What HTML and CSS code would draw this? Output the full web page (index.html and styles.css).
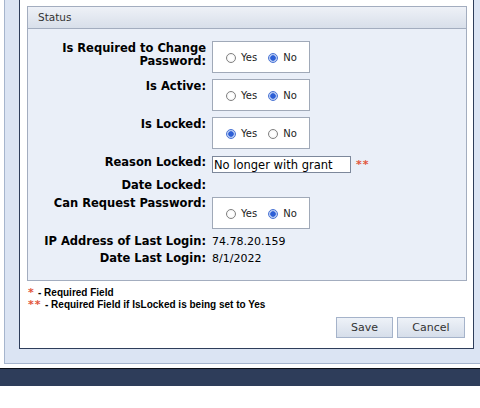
FILE: index.html
```html
<!DOCTYPE html>
<html>
<head>
<meta charset="utf-8">
<link rel="stylesheet" href="styles.css">
</head>
<body>
<div class="outer">
  <div class="inner">
    <div class="fieldset">
      <div class="legend">Status</div>
      <div class="fs-body">
        <div class="row">
          <div class="label">Is Required to Change Password:</div>
          <div class="radiobox">
            <span class="radio"></span><span class="rtext">Yes</span>
            <span class="radio on"></span><span class="rtext">No</span>
          </div>
        </div>
        <div class="row">
          <div class="label">Is Active:</div>
          <div class="radiobox">
            <span class="radio"></span><span class="rtext">Yes</span>
            <span class="radio on"></span><span class="rtext">No</span>
          </div>
        </div>
        <div class="row">
          <div class="label">Is Locked:</div>
          <div class="radiobox">
            <span class="radio on"></span><span class="rtext">Yes</span>
            <span class="radio"></span><span class="rtext">No</span>
          </div>
        </div>
        <div class="row row-input">
          <div class="label label-flat">Reason Locked:</div>
          <div class="field">
            <input class="textbox" type="text" value="No longer with grant">
            <span class="req">**</span>
          </div>
        </div>
        <div class="row row-text gap-a">
          <div class="label label-flat">Date Locked:</div>
          <div class="value"></div>
        </div>
        <div class="row gap-d">
          <div class="label label-flat">Can Request Password:</div>
          <div class="radiobox">
            <span class="radio"></span><span class="rtext">Yes</span>
            <span class="radio on"></span><span class="rtext">No</span>
          </div>
        </div>
        <div class="row row-text gap-b">
          <div class="label label-flat">IP Address of Last Login:</div>
          <div class="value">74.78.20.159</div>
        </div>
        <div class="row row-text gap-c">
          <div class="label label-flat">Date Last Login:</div>
          <div class="value">8/1/2022</div>
        </div>
      </div>
    </div>
    <div class="notes">
      <div class="note"><span class="star">*</span><span class="ntext">- Required Field</span></div>
      <div class="note"><span class="star star2">**</span><span class="ntext">- Required Field if IsLocked is being set to Yes</span></div>
    </div>
    <div class="buttons">
      <button class="btn btn-save" type="button">Save</button>
      <button class="btn btn-cancel" type="button">Cancel</button>
    </div>
  </div>
</div>
<div class="bar"></div>
</body>
</html>
```
FILE: styles.css
```css
html, body {
  margin: 0;
  padding: 0;
  background: #ffffff;
}
body {
  width: 480px;
  overflow: hidden;
  font-family: "DejaVu Sans", Verdana, sans-serif;
  color: #000;
}
.outer {
  margin: 0 -2px 0 4px;
  background: #dbe4f3;
  border: 1px solid #a6b5cd;
  border-top: 0;
  padding: 0 7px 14px 14px;
}
.inner {
  background: #ffffff;
  border: 1px solid #2e3d5a;
  border-top: 0;
  padding: 6px 6px 10px 7px;
}
.fieldset {
  border: 1px solid #a3adbf;
  background: #eaeff8;
}
.legend {
  height: 21px;
  line-height: 21px;
  border-bottom: 1px solid #a3adbf;
  background: linear-gradient(#eef1f7, #d8dfea);
  padding-left: 10px;
  font-size: 10.5px;
  color: #333;
}
.fs-body {
  padding: 12px 0 15px 0;
}
.row {
  display: flex;
  align-items: flex-start;
  gap: 6px;
}
.row + .row {
  margin-top: 6px;
}
.row.row-input {
  margin-top: 7px;
}
.row.gap-a { margin-top: 3px; }
.row.gap-d { margin-top: 8px; }
.row.gap-b { margin-top: 6px; }
.row.gap-c { margin-top: 4px; }
.label {
  width: 178px;
  flex: none;
  text-align: right;
  font-weight: bold;
  font-size: 11.5px;
  line-height: 13px;
  margin-top: 1px;
}
.label-flat {
  margin-top: 0;
}
.row-text {
  align-items: baseline;
  height: 13px;
}
.value {
  font-size: 11px;
  line-height: 13px;
  min-height: 13px;
}
.radiobox {
  box-sizing: border-box;
  width: 98px;
  height: 32px;
  background: #fff;
  border: 1px solid #a0a9b8;
  display: flex;
  align-items: center;
  padding: 1px 0 0 13px;
  font-size: 10px;
  line-height: 13px;
  color: #222;
}
.radio {
  box-sizing: border-box;
  width: 10px;
  height: 10px;
  border-radius: 50%;
  border: 1px solid #808080;
  background: radial-gradient(circle, #ffffff 0 2px, #f0f0f0 5px);
  flex: none;
}
.radio.on {
  border-color: #4a74d4;
  background: radial-gradient(circle, #2d5fd6 0 2.4px, #a9c0f0 3px, #e4ecfb 5px);
}
.rtext {
  margin-left: 5px;
  margin-right: 11px;
}
.field {
  display: flex;
  align-items: center;
}
.textbox {
  box-sizing: border-box;
  width: 139px;
  height: 17px;
  margin: 0;
  border: 1px solid #7d889b;
  padding: 0 1px;
  font-family: "DejaVu Sans", Verdana, sans-serif;
  font-size: 11.5px;
  color: #000;
  background: #fff;
  outline: none;
}
.req {
  margin-left: 5px;
  color: #e2563c;
  font-weight: bold;
  font-size: 11px;
  letter-spacing: 1px;
  line-height: 11px;
}
.notes {
  margin: 6px 0 0 1px;
  font-family: "Liberation Sans", Arial, sans-serif;
  font-weight: bold;
  font-size: 10px;
  line-height: 12px;
}
.note {
  display: flex;
  align-items: baseline;
}
.star {
  color: #e2563c;
  font-family: "DejaVu Sans", Verdana, sans-serif;
  font-size: 11px;
  line-height: 10px;
  width: 10px;
}
.star2 {
  width: 17px;
  letter-spacing: 1px;
}
.buttons {
  display: flex;
  justify-content: flex-end;
  gap: 4px;
  margin: 6px 2px 0 0;
}
.btn {
  box-sizing: border-box;
  height: 21px;
  margin: 0;
  padding: 0;
  border: 1px solid #a5b3ca;
  border-radius: 0;
  background: linear-gradient(#eef2f8, #d6deea);
  font-family: "DejaVu Sans", Verdana, sans-serif;
  font-size: 11px;
  color: #333;
}
.btn-save { width: 57px; }
.btn-cancel { width: 68px; }
.bar {
  margin-top: 4px;
  height: 17px;
  border-top: 1px solid #0b0f18;
  background: #2e3d5a;
}
```
